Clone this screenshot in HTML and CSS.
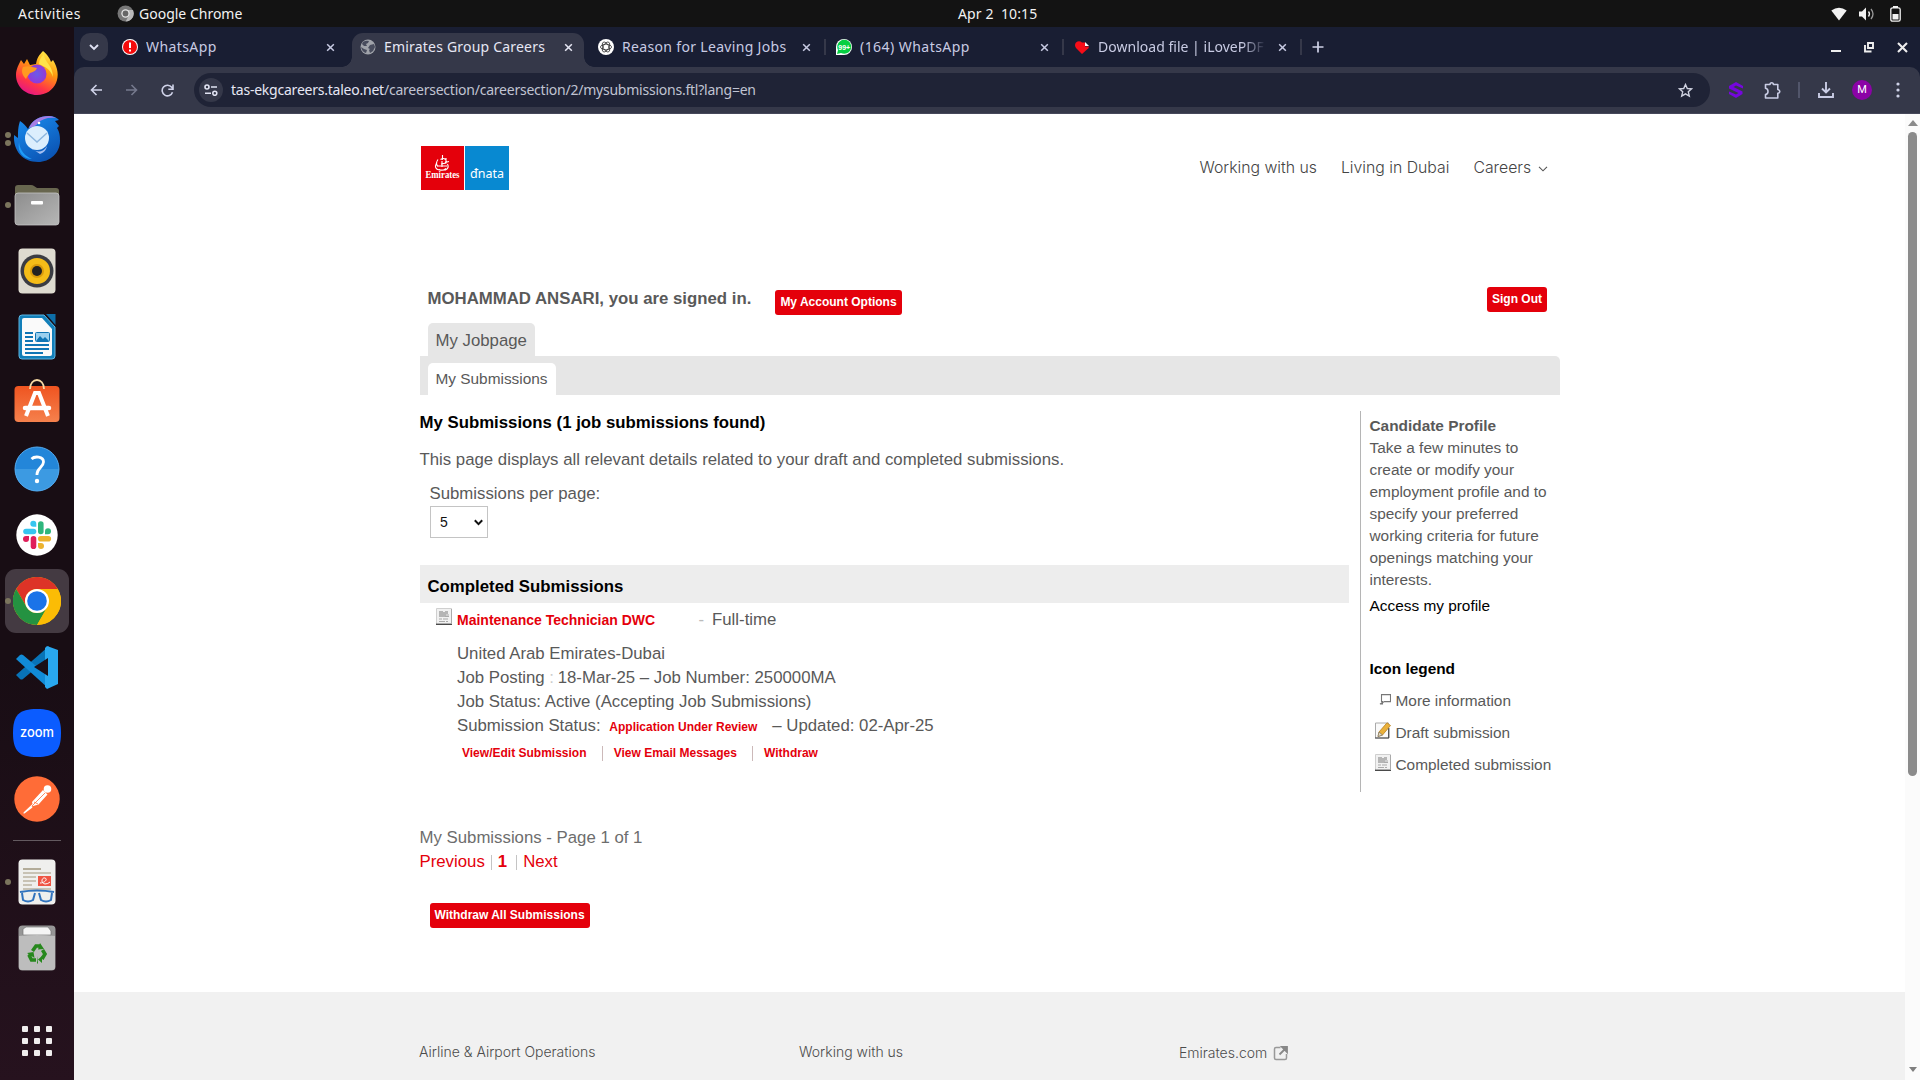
FILE: index.html
```html
<!DOCTYPE html>
<html lang="en">
<head>
<meta charset="utf-8">
<title>Emirates Group Careers</title>
<link rel="stylesheet" href="styles.css">
</head>
<body>
<svg class="defs" width="0" height="0" aria-hidden="true">
  <defs>
    <symbol id="close" viewBox="0 0 10 10"><path d="M1.3 1.3l7.4 7.4M8.7 1.3L1.3 8.7" fill="none" stroke="currentColor" stroke-width="1.7"/></symbol>
    <symbol id="page" viewBox="0 0 16 17">
      <path d="M.5.5h15v16H.5z" fill="#f1f1f1" stroke="#cfcfcf"/><path d="M0 16.3h16" stroke="#4a4a4a" stroke-width="1.4"/><path d="M15.5 1v15" stroke="#aaa"/>
      <path d="M3 3h4v1h2V3h3v3h-2v3H3z" fill="#b5b5b5"/><path d="M10 7h3M9 8.500h4M3 11h3M7 11h5M3 13.500h6M10 13.500h2" stroke="#aaa" stroke-width="1.200"/>
    </symbol>
  </defs>
</svg>

<header class="system-bar">
  <span class="activities">Activities</span>
  <div class="app-name">
    <svg width="17" height="17" viewBox="0 0 17 17"><circle cx="8.500" cy="8.500" r="8" fill="#777"/><path d="M8.500 5H16a8 8 0 0 1-7.300 11.500L12 10z" fill="#b9b9b9"/><circle cx="8.500" cy="8.500" r="4.200" fill="#e4e4e4"/><circle cx="8.500" cy="8.500" r="2.900" fill="#666"/></svg>
    <span>Google Chrome</span>
  </div>
  <span class="clock">Apr 2&nbsp; 10:15</span>
  <div class="indicators">
    <svg width="16" height="14" viewBox="0 0 16 14"><path d="M.3 3.500Q8-2 15.700 3.500L8 13.500z" fill="#f2f2f2"/></svg>
    <svg width="16" height="14" viewBox="0 0 16 14"><path d="M0 4.500h3L7 .5v13L3 9.500H0z" fill="#f2f2f2"/><path d="M9.500 4.500q2 2.500 0 5" fill="none" stroke="#f2f2f2" stroke-width="1.300"/><path d="M12 2q4 5 0 10" fill="none" stroke="#999" stroke-width="1.300"/></svg>
    <svg width="11" height="16" viewBox="0 0 11 16"><path d="M3 0h5v2H3z" fill="#f2f2f2"/><rect x=".8" y="1.800" width="9.400" height="13.400" rx="1.800" fill="none" stroke="#f2f2f2" stroke-width="1.300"/><path d="M2.500 8h6v5.500h-6z" fill="#f2f2f2"/></svg>
  </div>
</header>

<div class="desktop">
<nav class="dock">
  <div class="dock-item">
    <svg width="44" height="46" viewBox="0 0 44 46"><defs><linearGradient id="ff" x1=".8" y1="0" x2=".3" y2="1"><stop offset="0" stop-color="#fff44f"/><stop offset=".4" stop-color="#ff980e"/><stop offset=".75" stop-color="#ff3647"/><stop offset="1" stop-color="#e31587"/></linearGradient><radialGradient id="fp"><stop offset="0" stop-color="#6a5be8"/><stop offset="1" stop-color="#9338d8"/></radialGradient></defs><path d="M28 1c5 4 7 8 8 11l2-2c5 8 6 16 3 23-3 7-10 12-19 12C10 45 1 36 1 25c0-6 3-11 5-15l3 4 3-5 3 6 6-1c1-6 3-9 7-13z" fill="url(#ff)"/><path d="M29 4c0 8 9 11 9 23-2-6-5-8-8-10l-6-3c0-4 2-7 5-10z" fill="#ffe24a"/><circle cx="22" cy="24" r="9.500" fill="url(#fp)"/><path d="M8 17c5-2 9 0 14 1-1 3-4 4-7 5-1 2-3 3-4 6-4-4-5-8-3-12z" fill="#ff9a20"/></svg>
  </div>
  <div class="dock-item two">
    <svg width="48" height="46" viewBox="0 0 48 46"><defs><linearGradient id="tb" x1="0" y1="0" x2=".6" y2="1"><stop offset="0" stop-color="#1b91f3"/><stop offset="1" stop-color="#0b55b5"/></linearGradient></defs><path d="M7 5c4 3 6 5 8 8C19 4 26 0 36 0c5 0 8 2 10 4l-4 1 4 5-2 2c3 5 3 9 3 13 0 12-10 21-22 21C10 46 0 35 1 19l4 3c0-7 0-11 2-17z" fill="url(#tb)"/><path d="M16 12C19 4 27 0 36 0c3 0 5 1 7 2-8-1-14 1-18 5-2 3-5 4-9 5z" fill="#a57de5"/><path d="M6 26c1 9 6 14 13 17-9 0-15-7-13-17z" fill="#1e9cf8"/><circle cx="24" cy="22" r="12" fill="#dceefd"/><path d="M14 17l10 9 10-9" fill="none" stroke="#8eb7df" stroke-width="1.500"/><path d="M18 32c5 5 12 5 16-2-1 5-4 7-7 8z" fill="#a5bff2"/><circle cx="26" cy="7" r="1.300" fill="#fff"/></svg>
  </div>
  <div class="dock-item one">
    <svg width="46" height="42" viewBox="0 0 46 42"><defs><linearGradient id="fo" x1="0" y1="0" x2="1" y2="1"><stop offset="0" stop-color="#8d8d8d"/><stop offset="1" stop-color="#b6b6b6"/></linearGradient></defs><path d="M1 38V4q0-3 3-3h13q2 0 3 1l3 2h19q3 0 3 3v31z" fill="#68664f"/><rect x="1" y="9" width="44" height="32" rx="3" fill="url(#fo)" stroke="#c4c4c4" stroke-width=".8"/><rect x="17" y="17" width="12" height="3.500" rx="1" fill="#fff"/></svg>
  </div>
  <div class="dock-item">
    <svg width="38" height="46" viewBox="0 0 38 46"><rect x=".5" y=".5" width="37" height="45" rx="4" fill="#dedbd0"/><circle cx="19" cy="23" r="16.500" fill="#3b3d43"/><circle cx="19" cy="23" r="13" fill="#f5bd18"/><circle cx="19" cy="23" r="7" fill="#d99b0c"/><circle cx="19" cy="23" r="5" fill="#222"/></svg>
  </div>
  <div class="dock-item">
    <svg width="38" height="46" viewBox="0 0 38 46"><path d="M4 1h22l11 12v29q0 3-3 3H4q-3 0-3-3V4q0-3 3-3z" fill="#127fb9" stroke="#5db5e1" stroke-width="1"/><path d="M28 0h9.500v11z" fill="#0d6ea8"/><path d="M6 4h18l10 11v25q0 2-2 2H6q-2 0-2-2V6q0-2 2-2z" fill="#fafafa"/><path d="M7 19h8M7 23h8M7 27h8M7 31h24M7 35h24M7 39h18" stroke="#0f75b5" stroke-width="1.800"/><rect x="17.500" y="18.500" width="14" height="9" rx="1" fill="#9bd0ef" stroke="#0f75b5"/><path d="M18 27l4-5 3 3 2-2 4 4z" fill="#0f75b5"/></svg>
  </div>
  <div class="dock-item">
    <svg class="software" width="46" height="46" viewBox="0 0 46 46"><defs><linearGradient id="sw" x1="0" y1="0" x2="0" y2="1"><stop offset="0" stop-color="#ef5420"/><stop offset="1" stop-color="#f5814d"/></linearGradient></defs><rect x=".5" y="8" width="45" height="36" rx="4" fill="url(#sw)"/><path d="M16 11c0-12 14-12 14 0" fill="none" stroke="#f7dba5" stroke-width="1.800"/><path d="M12 38l9-23h4l9 23" fill="none" stroke="#fff" stroke-width="4"/><path d="M11 30h24" stroke="#fff" stroke-width="4.500" stroke-linecap="round"/></svg>
  </div>
  <div class="dock-item">
    <svg width="46" height="46" viewBox="0 0 46 46"><circle cx="23" cy="23" r="22" fill="#2386d9"/><path d="M1 23a22 22 0 0 0 44 0z" fill="#3c9ae2"/><circle cx="23" cy="23" r="22" fill="none" stroke="#53aaf0"/><path d="M17.500 13c3-3 12-3 12 3 0 5-6.500 6-6.500 12v1" fill="none" stroke="#fff" stroke-width="2.800"/><circle cx="23" cy="35" r="2.200" fill="#fff"/></svg>
  </div>
  <div class="dock-item">
    <svg width="42" height="42" viewBox="0 0 42 42"><circle cx="21" cy="21" r="20.700" fill="#fff"/><g stroke-width="5.600" stroke-linecap="round"><path d="M10 17.500h7.500" stroke="#36c5f0"/><path d="M24.800 10v7.500" stroke="#2eb67d"/><path d="M24.800 24.800h7.500" stroke="#ecb22e"/><path d="M17.500 24.800v7.500" stroke="#e01e5a"/></g><path d="M20.300 12.800h-3a3 3 0 1 1 3-3z" fill="#36c5f0"/><path d="M29 20.300v-3a3 3 0 1 1 3 3z" fill="#2eb67d"/><path d="M22 29h3a3 3 0 1 1-3 3z" fill="#ecb22e"/><path d="M13 22v3a3 3 0 1 1-3-3z" fill="#e01e5a"/></svg>
  </div>
  <div class="dock-item one current">
    <svg width="48" height="48" viewBox="0 0 48 48"><circle cx="24" cy="24" r="24" fill="#fbbc05"/><path d="M3.200 12A24 24 0 0 1 44.800 12H24a12 12 0 0 0-10.400 18z" fill="#dd3327"/><path d="M3.200 12A24 24 0 0 0 24 48l10.400-18A12 12 0 0 1 13.600 30z" fill="#249241"/><path d="M44.800 12H24a12 12 0 0 1 10.400 18L24 48A24 24 0 0 0 44.800 12z" fill="#fbbc05"/><circle cx="24" cy="24" r="12" fill="#fff"/><circle cx="24" cy="24" r="9.800" fill="#1a73e8"/></svg>
  </div>
  <div class="dock-item">
    <svg width="44" height="44" viewBox="0 0 44 44"><path d="M1 30l4 4q1.500 1 3 0L34 12V1z" fill="#0873b7"/><path d="M1 14l4-4q1.500-1 3 0l25 21v12z" fill="#118bd7"/><path d="M32 1l11 4v34l-11 5-2-2V3z" fill="#29a8ef"/><path d="M33 13L19 22l14 9z" fill="#1a0f17"/></svg>
  </div>
  <div class="dock-item">
    <svg width="48" height="48" viewBox="0 0 48 48"><path d="M24 0C42 0 48 6 48 24S42 48 24 48 0 42 0 24 6 0 24 0z" fill="#0b5cff"/><text x="24" y="28" text-anchor="middle" textLength="34" lengthAdjust="spacingAndGlyphs" class="zoom-word">zoom</text></svg>
  </div>
  <div class="dock-item">
    <svg class="postman" width="46" height="46" viewBox="0 0 46 46"><circle cx="23" cy="23" r="22.700" fill="#ff6c37"/><circle cx="33.500" cy="13" r="3.800" fill="#fff"/><path d="M29 14l4.500 4.500-9 10-7 2 1 1-8 6q-2 0-.5-1.500l8.500-8-.5-2z" fill="#fff"/><path d="M18 30l13-13M20 26l4 2" stroke="#ff6c37" stroke-width=".8"/></svg>
  </div>
  <div class="dock-rule"></div>
  <div class="dock-item one">
    <svg width="38" height="46" viewBox="0 0 38 46"><rect x=".5" y=".5" width="37" height="45" rx="4" fill="#efefed"/><path d="M5 10h18" stroke="#aca490" stroke-width="1.800"/><path d="M5 14h28M5 18h13M5 22h13M5 26h9M5 30h28" stroke="#c8c2b4" stroke-width="1.800"/><rect x="20" y="17" width="13" height="10" fill="#ef5544"/><path d="M22 24c5 0 8-4 5-5s-5 5 0 6q3 0 5-2" fill="none" stroke="#fff"/><path d="M2 33q17-3 34 0M4 34l1 7q5 3 10 0l2-7M21 34l2 7q5 3 10 0l1-7" fill="none" stroke="#3173bd" stroke-width="2"/></svg>
  </div>
  <div class="dock-item">
    <svg width="38" height="46" viewBox="0 0 38 46"><rect x=".5" y=".5" width="37" height="45" rx="4" fill="#969696"/><path d="M5 4l3-2h22l3 4v4H5z" fill="#f4f4f4" stroke="#777" stroke-width=".7"/><path d="M1 11q18-2 36 0v31q0 3-3 3H4q-3 0-3-3z" fill="#bdbdbd"/><g fill="none" stroke="#27881d" stroke-width="3.600"><path d="M14.500 26l3.500-5h4"/><path d="M24.500 25l2.500 4-3 5"/><path d="M18 35h-4.500l-2-4 1.500-2"/></g><path d="M22 18l4 6-6 .5zM20 31v8l-1-1zM24 31v7l-4-3.500zM9 28l6.500-1 1 6z" fill="#27881d"/></svg>
  </div>
  <div class="app-grid"><i></i><i></i><i></i><i></i><i></i><i></i><i></i><i></i><i></i></div>
</nav>

<div class="browser">
  <div class="tab-strip">
    <div class="tab-search"><svg width="10" height="7" viewBox="0 0 10 7"><path d="M1 1l4 4 4-4" fill="none" stroke="#dfe1f2" stroke-width="1.900"/></svg></div>
    <div class="tab first">
      <svg class="favicon" viewBox="0 0 16 16"><circle cx="8" cy="8" r="8" fill="#fff"/><circle cx="8" cy="8" r="7" fill="#f40b0b"/><path d="M8 3.500v5.500M8 10.500v2" stroke="#fff" stroke-width="2"/></svg>
      <span class="tab-title t1">WhatsApp</span><svg class="x"><use href="#close"/></svg>
    </div>
    <div class="tab active">
      <svg class="favicon" viewBox="0 0 16 16"><circle cx="8" cy="8" r="7.500" fill="#a0a3aa"/><path d="M3 3q3-2 6-1L8 4 6 5l1 2H4L2 5zM10 6l4-1 1 3-2 4-3 2-1-3 1-1-2-1zM1 8l3 2 3 1-1 3q-4-1-5-6z" fill="#484c5d"/></svg>
      <span class="tab-title t2">Emirates Group Careers</span><svg class="x"><use href="#close"/></svg>
    </div>
    <div class="tab">
      <svg class="favicon" viewBox="0 0 16 16"><circle cx="8" cy="8" r="8" fill="#fff"/><g fill="none" stroke="#333" stroke-width=".8"><ellipse cx="8" cy="8" rx="5.500" ry="2.800"/><ellipse cx="8" cy="8" rx="5.500" ry="2.800" transform="rotate(60 8 8)"/><ellipse cx="8" cy="8" rx="5.500" ry="2.800" transform="rotate(120 8 8)"/></g></svg>
      <span class="tab-title t3">Reason for Leaving Jobs</span><svg class="x"><use href="#close"/></svg>
    </div>
    <div class="tab rule">
      <svg class="favicon" viewBox="0 0 16 16"><path d="M0 16V8a8 8 0 1 1 8 8z" fill="#fff"/><path d="M1 15l1-4a7 7 0 1 1 3 3z" fill="#06cf42"/><text x="8.200" y="11" text-anchor="middle" class="badge-count">99+</text></svg>
      <span class="tab-title t4">(164) WhatsApp</span><svg class="x"><use href="#close"/></svg>
    </div>
    <div class="tab rule">
      <svg class="favicon" viewBox="0 0 16 16"><path d="M8 15L2 9Q0 6 2 3.500q3-2.500 6 0h3v4h4q0 2-2 3z" fill="#f70d18"/><path d="M11 3l4 4h-4z" fill="#fff"/></svg>
      <span class="tab-title t5 faded">Download file | iLovePDF</span><svg class="x"><use href="#close"/></svg>
    </div>
    <div class="new-tab rule"><svg width="12" height="12" viewBox="0 0 12 12"><path d="M6 .5v11M.5 6h11" stroke="#cfd2e8" stroke-width="1.700"/></svg></div>
    <div class="window-controls">
      <svg width="11" height="12" viewBox="0 0 11 12"><path d="M0 10h10" stroke="#eee" stroke-width="2"/></svg>
      <svg width="11" height="11" viewBox="0 0 11 11"><path d="M4 1h5v5H4zM1 3v6.500h6.500" fill="none" stroke="#eee" stroke-width="1.900"/></svg>
      <svg width="11" height="11" viewBox="0 0 11 11"><path d="M1 1l9 9M10 1l-9 9" stroke="#eee" stroke-width="2.100"/></svg>
    </div>
  </div>
  <div class="toolbar-backing">
  <div class="toolbar">
    <div class="nav-buttons">
      <svg width="12" height="12" viewBox="0 0 12 12"><path d="M12 6H1.500M6.500 1l-5 5 5 5" fill="none" stroke="#cfd2e8" stroke-width="1.600"/></svg>
      <svg width="12" height="12" viewBox="0 0 12 12"><path d="M0 6h10.500M5.500 1l5 5-5 5" fill="none" stroke="#75798d" stroke-width="1.600"/></svg>
      <svg width="13" height="13" viewBox="0 0 13 13"><path d="M11.500 8.200A5.300 5.300 0 1 1 10.700 3.300l1.300 1.500M12 .5v4.800H7.300" fill="none" stroke="#cfd2e8" stroke-width="1.600"/></svg>
    </div>
    <div class="address">
      <div class="site-info"><svg width="14" height="12" viewBox="0 0 14 12"><g fill="none" stroke="#e1e3f2" stroke-width="1.600"><circle cx="3" cy="3" r="2"/><path d="M7 3h6M1 9.300h6"/><circle cx="10.800" cy="9.300" r="2"/></g></svg></div>
      <span class="url"><b>tas-ekgcareers.taleo.net</b>/careersection/careersection/2/mysubmissions.ftl?lang=en</span>
      <svg class="star" width="15" height="15" viewBox="0 0 15 15"><path d="M7.500 1.500l1.800 4 4.300.4-3.300 2.900 1 4.300-3.800-2.300-3.800 2.300 1-4.300L1.400 5.900l4.300-.4z" fill="none" stroke="#cfd2e0" stroke-width="1.400"/></svg>
    </div>
    <div class="tools">
      <svg class="ext-s" width="14" height="16" viewBox="0 0 14 16"><path d="M0 4l7-4 7 4v2.500L7 3.500 4.500 5l9 4.500V12L7 16 0 12V9.500l7 3 2.500-1.500L0 6.500z" fill="#7606df"/></svg>
      <svg class="puzzle" width="17" height="17" viewBox="0 0 17 17"><path d="M1.500 2.500H6q0-1.700 1.700-1.700t1.700 1.700h4.400v5q2 .3 2 1.900t-2 1.900V16H1.500v-3.500q2.500-.5 2.500-3.100T1.500 6.300z" fill="none" stroke="#c9cce4" stroke-width="1.600" stroke-linejoin="round"/></svg>
      <i class="tool-rule"></i>
      <svg class="download" width="16" height="16" viewBox="0 0 16 16"><path d="M8 0v10M4 6.500l4 4 4-4M1 11v4h14v-4" fill="none" stroke="#c9cce4" stroke-width="1.900"/></svg>
      <span class="avatar">M</span>
      <svg class="menu" width="4" height="16" viewBox="0 0 4 16" fill="#cfd2e8"><circle cx="2" cy="2" r="1.600"/><circle cx="2" cy="8" r="1.600"/><circle cx="2" cy="14" r="1.600"/></svg>
    </div>
  </div>
  </div>

  <div class="viewport">
    <div class="document">
      <div class="wrap">
        <div class="site-header">
          <div class="logo">
            <div class="logo-red"><svg width="43" height="44" viewBox="0 0 43 44"><path d="M21.500 9v5M19.500 13.500q3-2 5 0M17 13.500q-3 4 0 7M25 12v5l-5 1M15.500 17q-3 6 3 7h6q4-2 2-6M17 20h9M21 15v6M18 23.500q4 2 7-1M24 16.500l4-1" fill="none" stroke="#fff" stroke-width="1.100"/><text x="21.500" y="32" text-anchor="middle" textLength="34" lengthAdjust="spacingAndGlyphs" class="emirates-word">Emirates</text></svg></div>
            <div class="logo-blue"><svg width="44" height="44" viewBox="0 0 44 44"><text x="22" y="32" text-anchor="middle" textLength="34" lengthAdjust="spacingAndGlyphs" class="dnata-word">dnata</text><path d="M9.500 23.500h4" stroke="#fff" stroke-width="1.100"/></svg></div>
          </div>
          <div class="site-nav">
            <span>Working with us</span><span>Living in Dubai</span><span>Careers</span>
            <svg width="10" height="6" viewBox="0 0 10 6"><path d="M1 .8l4 4 4-4" fill="none" stroke="#555" stroke-width="1.100"/></svg>
          </div>
        </div>
        <div class="account">
          <strong>MOHAMMAD ANSARI, you are signed in.</strong>
          <button class="btn options">My Account Options</button>
          <button class="btn signout">Sign Out</button>
        </div>
        <div class="jobpage-row"><span class="jobpage">My Jobpage</span></div>
        <div class="subnav"><span class="subtab">My Submissions</span></div>
        <div class="columns">
          <main>
            <h1>My Submissions (1 job submissions found)</h1>
            <p class="intro">This page displays all relevant details related to your draft and completed submissions.</p>
            <label class="per-page">Submissions per page:</label>
            <div class="select"><span>5</span><svg width="9" height="7" viewBox="0 0 9 7"><path d="M.8 1.200l3.700 3.900 3.700-3.900" fill="none" stroke="#111" stroke-width="2"/></svg></div>
            <h2>Completed Submissions</h2>
            <div class="job-title">
              <svg width="16" height="17"><use href="#page"/></svg>
              <a>Maintenance Technician DWC</a><span class="dash">-</span><span>Full-time</span>
            </div>
            <div class="job">
              <div>United Arab Emirates-Dubai</div>
              <div>Job Posting <span class="pale">:</span> 18-Mar-25 – Job Number: 250000MA</div>
              <div>Job Status: Active (Accepting Job Submissions)</div>
              <div class="status">Submission Status: <a>Application Under Review</a><span>– Updated: 02-Apr-25</span></div>
            </div>
            <div class="actions"><a>View/Edit Submission</a><i></i><a>View Email Messages</a><i></i><a>Withdraw</a></div>
            <div class="pager">
              <div>My Submissions - Page 1 of 1</div>
              <div class="pages"><a>Previous</a><i></i><b>1</b><i class="late"></i><a>Next</a></div>
            </div>
            <button class="btn withdraw">Withdraw All Submissions</button>
          </main>
          <aside>
            <h3>Candidate Profile</h3>
            <p>Take a few minutes to<br>create or modify your<br>employment profile and to<br>specify your preferred<br>working criteria for future<br>openings matching your<br>interests.</p>
            <a class="access">Access my profile</a>
            <h3 class="legend">Icon legend</h3>
            <div class="legend-row"><svg class="info" width="12" height="11" viewBox="0 0 12 11"><path d="M2.500.6h9v7h-6L1 10h2.500V7.600h-1z" fill="#fff" stroke="#777" stroke-width="1.100"/></svg><span>More information</span></div>
            <div class="legend-row"><svg width="16" height="17" viewBox="0 0 16 17"><path d="M.5 1h13v15H.5z" fill="#fafafa" stroke="#aaa"/><path d="M0 16h14M13.800 6v10" stroke="#444" stroke-width="1.200"/><path d="M4 10L12 .8l3.500 2.700L7.500 13 3 14.500z" fill="#eab13b" stroke="#b98220" stroke-width=".8"/><path d="M4 10l3.500 3L3 14.500z" fill="#e8dcc0" stroke="#666" stroke-width=".6"/></svg><span>Draft submission</span></div>
            <div class="legend-row"><svg width="16" height="17"><use href="#page"/></svg><span>Completed submission</span></div>
          </aside>
        </div>
      </div>
      <footer>
        <span>Airline &amp; Airport Operations</span>
        <span>Working with us</span>
        <span class="ext">Emirates.com <svg width="15" height="15" viewBox="0 0 15 15"><path d="M7.500 1.500H3q-1.500 0-1.500 1.500v9Q1.500 13.500 3 13.500h9q1.500 0 1.500-1.500V8" fill="none" stroke="#999" stroke-width="1.500"/><path d="M9 1h5v5zM6.500 8.500L12 3" fill="#888" stroke="#888" stroke-width="1.800"/></svg></span>
      </footer>
    </div>
    <div class="scrollbar">
      <svg width="10" height="6" viewBox="0 0 10 6"><path d="M5 0l5 6H0z" fill="#8b8b8b"/></svg>
      <div class="thumb"></div>
      <svg class="down" width="8" height="5" viewBox="0 0 8 5"><path d="M0 0h8L4 5z" fill="#7f7f7f"/></svg>
    </div>
  </div>
</div>
</div>
</body>
</html>
```
FILE: styles.css
```css
* { box-sizing: border-box; }
body { margin: 0; width: 1920px; height: 1080px; overflow: hidden; font-family: "Liberation Sans", Arial, sans-serif; }
svg { display: block; flex: none; }
.defs { position: absolute; }
h1, h2, h3, p { margin: 0; }

/* System bar */
.system-bar { display: flex; align-items: center; height: 27px; padding: 0 19px 0 18px; background: #131313; color: #f2f2f2; font: 14px/26px "Noto Sans", sans-serif; white-space: nowrap; }
.activities { width: 99px; letter-spacing: .45px; }
.app-name { display: flex; align-items: center; gap: 5px; width: 841px; }
.clock { letter-spacing: .1px; }
.indicators { display: flex; align-items: center; gap: 12px; margin-left: auto; }
.indicators svg:last-child { margin-left: 3px; }

/* Dock */
.desktop { display: flex; height: 1053px; }
.dock { display: flex; flex-direction: column; align-items: center; width: 74px; padding-top: 13px; background: linear-gradient(#180d14 60%, #26121e); }
.dock-item { position: relative; display: flex; align-items: center; justify-content: center; flex: none; width: 74px; height: 66px; }
.current::after { content: ""; position: absolute; left: 5px; top: 1px; width: 64px; height: 64px; border-radius: 11px; background: #443a42; }
.current svg { position: relative; z-index: 1; }
.one::before, .two::before { content: ""; position: absolute; z-index: 2; left: 5px; top: 30px; width: 6px; height: 6px; border-radius: 50%; background: #7b755d; }
.two::before { top: 26px; }
.two::after { content: ""; position: absolute; left: 5px; top: 34px; width: 6px; height: 6px; border-radius: 50%; background: #7b755d; }
.software { margin-bottom: 4px; }
.postman { margin-bottom: 1px; }
.dock-rule { flex: none; width: 48px; height: 1px; margin: 8px 0; background: #635a60; }
.app-grid { display: grid; grid-template-columns: repeat(3, 6px); gap: 6px; margin-top: 45px; }
.app-grid i { width: 6px; height: 6px; border-radius: 1px; background: #f0eeee; }
.zoom-word { font: 500 13px "Inter", sans-serif; fill: #fff; }

/* Browser chrome */
.browser { display: flex; flex-direction: column; width: 1846px; }
.tab-strip { display: flex; align-items: center; height: 40px; padding: 0 12px 0 6px; background: #191e33; color: #c8cbe3; font: 14px/34px "Noto Sans", sans-serif; white-space: nowrap; }
.tab-search { display: flex; align-items: center; justify-content: center; width: 28px; height: 28px; border-radius: 10px; background: #353849; }
.tab { position: relative; display: flex; align-items: center; width: 238px; height: 34px; padding-left: 8px; }
.tab.first { width: 244px; padding-left: 14px; }
.tab.active { align-self: flex-end; width: 232px; margin-right: 6px; padding-bottom: 6px; border-radius: 11px 11px 0 0; background: #353849; color: #e6e7f4; }
.tab.active::before, .tab.active::after { content: ""; position: absolute; bottom: 0; width: 10px; height: 10px; }
.tab.active::before { left: -10px; background: radial-gradient(circle at 0 0, transparent 9.500px, #353849 10px); }
.tab.active::after { right: -10px; background: radial-gradient(circle at 100% 0, transparent 9.500px, #353849 10px); }
.rule::before { content: ""; position: absolute; left: -4px; top: 9px; width: 2px; height: 16px; background: #353849; }
.favicon { width: 16px; height: 16px; }
.tab-title { width: 180px; margin-left: 8px; overflow: hidden; }
.t1 { letter-spacing: .4px; }
.t2 { letter-spacing: .2px; }
.t3 { letter-spacing: .33px; }
.t4 { letter-spacing: .45px; }
.t5 { letter-spacing: .02px; }
.faded { width: 168px; margin-right: 12px; -webkit-mask-image: linear-gradient(90deg, #000 86%, transparent); mask-image: linear-gradient(90deg, #000 86%, transparent); }
.x { width: 9px; height: 9px; }
.badge-count { font: bold 7px "Liberation Sans", sans-serif; fill: #fff; }
.new-tab { position: relative; display: flex; align-items: center; height: 34px; padding-left: 8px; }
.window-controls { display: flex; align-items: center; gap: 22px; margin-left: auto; }
.toolbar-backing { background: #191e33; }
.toolbar { display: flex; align-items: center; height: 47px; padding: 0 19px 0 16px; border-radius: 10px 10px 0 0; background: #353849; border-bottom: 1px solid #46485a; }
.nav-buttons { display: flex; align-items: center; gap: 23.500px; width: 104px; }
.address { display: flex; align-items: center; width: 1516px; height: 34px; padding: 0 17px 0 5px; border-radius: 17px; background: #1f2336; }
.site-info { display: flex; align-items: center; justify-content: center; width: 24px; height: 24px; border-radius: 50%; background: #353849; }
.url { margin-left: 8px; color: #c0c3d2; font: 14px/34px "Noto Sans", sans-serif; letter-spacing: -.23px; white-space: nowrap; }
.url b { color: #e6e7f4; font-weight: 400; }
.star { margin-left: auto; }
.tools { display: flex; align-items: center; }
.ext-s { margin-left: 19px; }
.puzzle { margin-left: 21px; }
.tool-rule { width: 2px; height: 16px; margin-left: 17px; background: #52566b; }
.download { margin-left: 18px; }
.avatar { width: 20px; height: 20px; margin-left: 18px; border-radius: 50%; background: #8b03a6; color: #fff; font: 11px/20px "Roboto", sans-serif; text-align: center; }
.menu { margin-left: 24px; }

/* Page */
.viewport { display: flex; height: 966px; background: #fff; }
.document { width: 1831px; color: #595959; font-size: 16.800px; line-height: 24px; white-space: nowrap; }
.scrollbar { display: flex; flex-direction: column; align-items: center; width: 15px; padding: 6px 0 8px; background: #fbfbfb; }
.thumb { width: 9px; height: 644px; margin-top: 6px; border-radius: 5px; background: #8b8b8b; }
.down { margin-top: auto; }
.wrap { width: 1140.500px; height: 878px; margin-left: 345.500px; }
.site-header { display: flex; height: 173px; padding-top: 32px; }
.logo { display: flex; gap: 1px; width: 88px; height: 44px; margin-left: 1.500px; }
.logo-red { background: #e4000b; }
.logo-blue { background: #0889d1; }
.emirates-word { font: bold 9.500px "Liberation Serif", serif; fill: #fff; }
.dnata-word { font: 12px "Noto Sans", sans-serif; fill: #fff; }
.site-nav { display: flex; align-items: center; height: 44px; margin-left: 690.500px; gap: 24px; color: #444; font: 300 15.800px/44px "Inter", sans-serif; }
.site-nav span { height: 44px; }
.site-nav svg { margin-left: -17px; margin-top: 2px; }
.btn { height: 25px; padding: 0 0 1px; border: 0; border-radius: 3px; background: #e4000b; color: #fff; font: bold 12px/24px "Liberation Sans", Arial, sans-serif; text-align: center; }
.account { display: flex; align-items: flex-start; height: 36px; padding-left: 8px; }
.account strong { width: 347.500px; }
.options { width: 127px; margin-top: 3px; }
.signout { width: 60px; margin-left: 585px; }
.jobpage-row { height: 33px; padding-left: 8px; }
.jobpage { display: block; width: 107px; height: 33px; padding-left: 8px; border-radius: 5px 5px 0 0; background: #e6e6e6; line-height: 35px; }
.subnav { height: 39px; padding: 7px 0 0 8px; border-radius: 0 5px 0 0; background: #e6e6e6; }
.subtab { display: block; width: 128px; height: 32px; padding-left: 8px; border-radius: 5px 5px 0 0; background: #fff; font-size: 15.400px; line-height: 32px; }
.columns { display: flex; gap: 10.500px; }
main { width: 929.500px; padding-top: 16px; }
h1 { color: #000; font-size: 16.800px; line-height: 24px; }
.intro { margin-top: 13px; }
.per-page { display: block; margin: 10px 0 0 10px; }
.select { display: flex; align-items: center; justify-content: space-between; width: 58px; height: 32px; margin-left: 10px; padding: 0 4px 0 9.500px; border: 1px solid #c4c4c4; color: #111; font-size: 14px; }
h2 { height: 38px; margin-top: 27px; padding-left: 8px; background: #ededed; color: #000; font-size: 16.800px; line-height: 43px; }
.job-title { display: flex; align-items: flex-start; height: 24px; margin: 5px 0 10px 16px; }
.job-title svg { margin: 0 5.500px 0 0; }
a, .pages b { color: #e4000b; }
.job-title a { width: 241.500px; font-size: 14px; line-height: 24px; font-weight: bold; }
.dash { width: 13.500px; color: #bbb; }
.job { padding-left: 37.500px; }
.pale { margin-right: -1px; color: #ccc; }
.status { display: flex; white-space: pre; }
.status a { width: 163px; margin-left: 4px; font-size: 12px; font-weight: bold; line-height: 27px; height: 24px; }
.actions { display: flex; align-items: center; height: 20px; margin: 5px 0 0 42.500px; font-size: 12px; font-weight: bold; line-height: 20px; }
.actions i { width: 1px; height: 15px; margin: 0 11px 0 15.200px; background: #ccb9b9; }
.pager { margin-top: 62px; padding-top: 1px; color: #6d6d6d; }
.pages { display: flex; align-items: center; }
.pages i { width: 1px; height: 15px; margin: 0 6px 0 6px; background: #c4c4c4; }
.pages i.late { margin: 0 6px 0 9px; }
.withdraw { display: block; width: 160px; margin: 29px 0 0 10px; }
aside { width: 200.500px; height: 381px; margin-top: 16px; padding: 4px 0 0 9px; border-left: 1px solid #b5b5b5; font-size: 15.400px; line-height: 22px; }
h3 { font-size: 15.400px; line-height: 22px; }
.access { display: block; margin-top: 4px; color: #000; }
.legend { margin-top: 41px; color: #000; }
.legend-row { display: flex; align-items: flex-start; gap: 5px; height: 22px; margin: 10px 0 0 5px; }
.legend-row .info { margin: 4px 0 0 4px; }
footer { display: grid; grid-template-columns: 380px 380px 1fr; height: 88px; padding: 48px 0 0 345px; background: #f1f1f1; color: #4c4c4c; font: 300 14px/24px "Inter", sans-serif; }
.ext { display: flex; align-items: center; gap: 6px; height: 26px; }
```
